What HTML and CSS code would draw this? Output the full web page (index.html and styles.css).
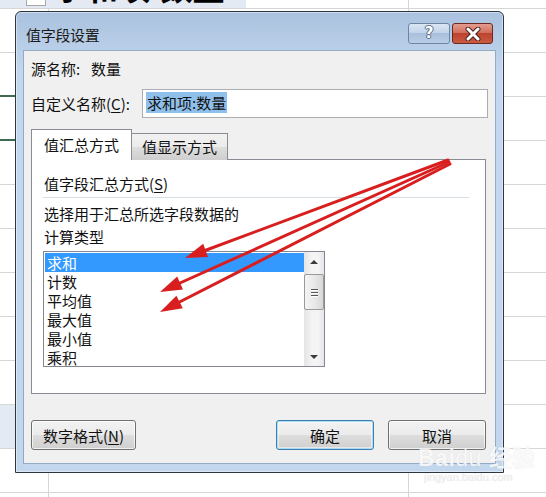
FILE: index.html
```html
<!DOCTYPE html>
<html lang="zh-CN">
<head>
<meta charset="utf-8">
<title>值字段设置</title>
<link rel="stylesheet" href="styles.css">
</head>
<body>
<div class="sheet">
  <div class="sheet-head"><span class="chk"></span><span class="big">求和项:数量</span></div>
  <div class="green-line g1"></div>
  <div class="green-line g2"></div>
  <div class="left-fill"></div>
</div>

<div class="window">
  <div class="titlebar">
    <span class="title">值字段设置</span>
    <div class="caption-btns">
      <span class="cap-btn help">?</span>
      <span class="cap-btn close">
        <svg width="18" height="14" viewBox="0 0 18 14"><path d="M4 2 L14 12 M14 2 L4 12" stroke="#4a2320" stroke-width="5" stroke-linecap="round"/><path d="M4 2 L14 12 M14 2 L4 12" stroke="#fff" stroke-width="3" stroke-linecap="round"/></svg>
      </span>
    </div>
  </div>
  <div class="client">
    <div class="src-row"><span class="src-label">源名称:</span><span>数量</span></div>
    <div class="name-row">
      <span class="name-label">自定义名称(<u>C</u>):</span>
      <div class="input"><span class="sel">求和项:数量</span></div>
    </div>
    <div class="tabs">
      <div class="tab active">值汇总方式</div>
      <div class="tab">值显示方式</div>
    </div>
    <div class="panel">
      <div class="group-title">值字段汇总方式(<u>S</u>)</div>
      <div class="sep"></div>
      <div class="desc">选择用于汇总所选字段数据的</div>
      <div class="desc">计算类型</div>
      <div class="listbox">
        <ul class="items">
          <li class="selected">求和</li>
          <li>计数</li>
          <li>平均值</li>
          <li>最大值</li>
          <li>最小值</li>
          <li>乘积</li>
        </ul>
        <div class="scrollbar">
          <div class="arrow up"></div>
          <div class="thumb"><i></i><i></i><i></i></div>
          <div class="track"></div>
          <div class="arrow down"></div>
        </div>
      </div>
    </div>
    <div class="footer">
      <button class="btn wide">数字格式(<u>N</u>)</button>
      <span class="spacer"></span>
      <button class="btn default">确定</button>
      <button class="btn">取消</button>
    </div>
  </div>
</div>

<svg class="arrows" width="546" height="497" viewBox="0 0 546 497">
  <g stroke="#d81e1e" stroke-width="3" stroke-linecap="round">
    <line x1="448" y1="160" x2="205" y2="250.5"/>
    <line x1="449" y1="162" x2="180" y2="283"/>
    <line x1="450" y1="164" x2="179.5" y2="302"/>
  </g>
  <g fill="#d81e1e">
    <polygon points="185,258 203.2,243.7 208,256.9"/>
    <polygon points="160,292 177.2,276.6 183,289.4"/>
    <polygon points="160,312 176.4,295.8 182.8,308.2"/>
  </g>
</svg>

<div class="watermark">
  <div class="wm-main">Bai<span class="paw">du</span> 经验</div>
  <div class="wm-sub">jingyan.baidu.com</div>
</div>
</body>
</html>
```

FILE: styles.css
```css
* { box-sizing: border-box; }

html, body {
  margin: 0;
  padding: 0;
}

body {
  width: 546px;
  height: 497px;
  overflow: hidden;
  position: relative;
  background: #fff;
  font-family: "Noto Sans CJK SC", "Microsoft YaHei", sans-serif;
  color: #111;
}

/* ---------- spreadsheet behind ---------- */
.sheet {
  position: absolute;
  inset: 0;
  background-image:
    linear-gradient(90deg, transparent 48px, #d6d6d6 48px, #d6d6d6 49px, transparent 49px, transparent 408px, #d6d6d6 408px, #d6d6d6 409px, transparent 409px),
    repeating-linear-gradient(180deg, transparent 0, transparent 8px, #d6d6d6 8px, #d6d6d6 9px, transparent 9px, transparent 44px);
}

.sheet-head {
  position: absolute;
  left: 0;
  top: 0;
  width: 246px;
  height: 8px;
  background: #e3eaf4;
  overflow: hidden;
}

.chk {
  position: absolute;
  left: 26px;
  top: -14px;
  width: 20px;
  height: 20px;
  border: 1px solid #a8a8a8;
  background: #fff;
}

.big {
  position: absolute;
  left: 54px;
  top: -31px;
  font-size: 32px;
  line-height: 34px;
  font-weight: 700;
  color: #000;
  white-space: nowrap;
}

.green-line {
  position: absolute;
  left: 0;
  width: 16px;
  height: 2px;
  background: #3d6b52;
}
.g1 { top: 95px; }
.g2 { top: 139px; }

.left-fill {
  position: absolute;
  left: 0;
  top: 405px;
  width: 16px;
  height: 43px;
  background: #e3eaf4;
}

/* ---------- window ---------- */
.window {
  position: absolute;
  left: 15px;
  top: 11px;
  width: 489px;
  height: 462px;
  border: 1px solid #2e3640;
  border-radius: 6px 6px 0 0;
  background: linear-gradient(180deg, #a9c2df 0, #b7cce6 30px, #c3d7ee 60px, #c2d6ed 100%);
  display: flex;
  flex-direction: column;
  padding: 0 7px 8px 7px;
  box-shadow: inset 0 0 0 1px rgba(255,255,255,0.45);
}

.titlebar {
  height: 38px;
  flex: none;
  display: flex;
  align-items: flex-start;
  justify-content: space-between;
}

.title {
  font-size: 15px;
  line-height: 20px;
  padding-top: 13px;
  padding-left: 3px;
  color: #1a1a1a;
  letter-spacing: -0.3px;
}

.caption-btns {
  display: flex;
  gap: 2px;
  padding-top: 11px;
  margin-right: 3px;
}

.cap-btn {
  height: 21px;
  border-radius: 3px;
  display: flex;
  align-items: center;
  justify-content: center;
}

.help {
  width: 42px;
  border: 1px solid #6e85a4;
  background: linear-gradient(180deg, #dbe6f3 0, #c3d4ea 45%, #a9bfdb 50%, #b9cde6 100%);
  color: #fff;
  font-family: "DejaVu Sans", sans-serif;
  font-weight: 700;
  font-size: 15px;
  line-height: 19px;
  text-shadow: 0 0 1px #4d5f78, 0 0 1px #4d5f78, 1px 0 0 #6a7f9c, -1px 0 0 #6a7f9c, 0 1px 0 #6a7f9c, 0 -1px 0 #6a7f9c;
}

.close {
  width: 41px;
  border: 1px solid #6b2a22;
  background: linear-gradient(180deg, #e39d8f 0, #d2705e 45%, #bd4430 50%, #c95a3f 100%);
}

.client {
  flex: 1;
  background: #f0f0f0;
  border: 1px solid #94abc8;
  padding: 0 9px 0 7px;
  display: flex;
  flex-direction: column;
  font-size: 15px;
}

.src-row {
  margin-top: 8px;
  height: 20px;
  line-height: 20px;
  display: flex;
}
.src-label { width: 60px; }

.name-row {
  margin-top: 10px;
  display: flex;
  align-items: center;
  height: 29px;
}
.name-label {
  width: 111px;
  line-height: 20px;
}
.input {
  flex: 1;
  height: 29px;
  margin-right: -2px;
  border: 1px solid #abadb3;
  background: #fff;
  padding: 2px 3px;
}
.sel {
  display: inline-block;
  background: #8fc0ec;
  line-height: 21px;
  padding: 0 1px;
}

u { text-decoration: underline; text-underline-offset: 2px; }

/* tabs */
.tabs {
  margin-top: 12px;
  display: flex;
  align-items: flex-end;
  height: 30px;
  position: relative;
  z-index: 1;
  margin-bottom: -1px;
}
.tab {
  height: 27px;
  border: 1px solid #898c95;
  border-bottom: none;
  background: linear-gradient(180deg, #f2f2f2 0, #ebebeb 50%, #dddddd 51%, #cfcfcf 100%);
  line-height: 25px;
  padding: 0 0 0 10px;
  width: 97px;
  margin-left: -1px;
  white-space: nowrap;
}
.tab.active {
  height: 31px;
  width: 101px;
  margin-left: 0;
  background: #fff;
  padding: 0 0 0 12px;
  line-height: 30px;
  position: relative;
  z-index: 2;
}

.panel {
  height: 235px;
  border: 1px solid #898c95;
  background: #fff;
  padding: 14px 10px 0 11px;
}

.group-title {
  line-height: 20px;
  padding-left: 1px;
}
.sep {
  height: 1px;
  background: #d5dfe5;
  margin: 3px 6px 0 0;
}
.desc {
  line-height: 23px;
  padding-left: 1px;
}
.sep + .desc { margin-top: 4px; }

.listbox {
  margin-top: 3px;
  width: 282px;
  height: 116px;
  border: 1px solid #828790;
  display: flex;
  padding: 1px;
  overflow: hidden;
}
.items {
  list-style: none;
  margin: 0;
  padding: 0;
  flex: 1;
}
.items li {
  height: 19px;
  line-height: 19px;
  padding-left: 2px;
}
.items li.selected {
  background: #3399ff;
  color: #fff;
}

.scrollbar {
  width: 20px;
  display: flex;
  flex-direction: column;
  background: linear-gradient(90deg, #e4e4e8, #f4f4f4 40%, #f4f4f4 70%, #e6e6ea);
  margin: -1px -1px -1px 0;
}
.arrow {
  height: 20px;
  position: relative;
}
.arrow::after {
  content: "";
  position: absolute;
  left: 6px;
  border-left: 4px solid transparent;
  border-right: 4px solid transparent;
}
.arrow.up::after {
  top: 8px;
  border-bottom: 4px solid #3b3b3b;
}
.arrow.down::after {
  top: 9px;
  border-top: 4px solid #3b3b3b;
}
.thumb {
  height: 36px;
  margin: 2px 0 0 0;
  border: 1px solid #9a9a9a;
  border-radius: 2px;
  background: linear-gradient(90deg, #f4f4f4, #e9e9e9 50%, #d8d8d8);
  display: flex;
  flex-direction: column;
  justify-content: center;
  align-items: center;
  gap: 2px;
}
.thumb i {
  display: block;
  width: 7px;
  height: 1px;
  background: #555;
  box-shadow: 0 1px 0 #fff;
}
.track { flex: 1; }

/* buttons */
.footer {
  margin-top: 26px;
  display: flex;
  gap: 14px;
}
.spacer { flex: 1; }
.btn {
  height: 30px;
  width: 98px;
  border: 1px solid #707070;
  border-radius: 3px;
  background: linear-gradient(180deg, #f2f2f2 0, #ebebeb 50%, #dddddd 51%, #cfcfcf 100%);
  font-family: inherit;
  font-size: 15px;
  color: #111;
  padding: 0;
  box-shadow: inset 0 0 0 1px rgba(255,255,255,0.7);
}
.btn.wide { width: 105px; }
.btn.default {
  border-color: #3c7fb1;
  box-shadow: inset 0 0 0 1px #a8dcf1, inset 0 0 0 2px rgba(255,255,255,0.5);
}

/* arrows overlay */
.arrows {
  position: absolute;
  left: 0;
  top: 0;
  pointer-events: none;
}

/* watermark */
.watermark {
  position: absolute;
  left: 418px;
  top: 445px;
  color: rgba(255,255,255,0.85);
  text-shadow: 0 0 1px rgba(0,0,0,0.12);
  font-family: "Liberation Sans", sans-serif;
}
.wm-main {
  font-size: 23px;
  font-weight: 700;
  line-height: 26px;
  letter-spacing: 0.5px;
}
.wm-main .paw { font-weight: 400; }
.wm-sub {
  font-size: 11px;
  line-height: 12px;
  color: rgba(240,240,240,0.9);
  padding-left: 6px;
}
```
